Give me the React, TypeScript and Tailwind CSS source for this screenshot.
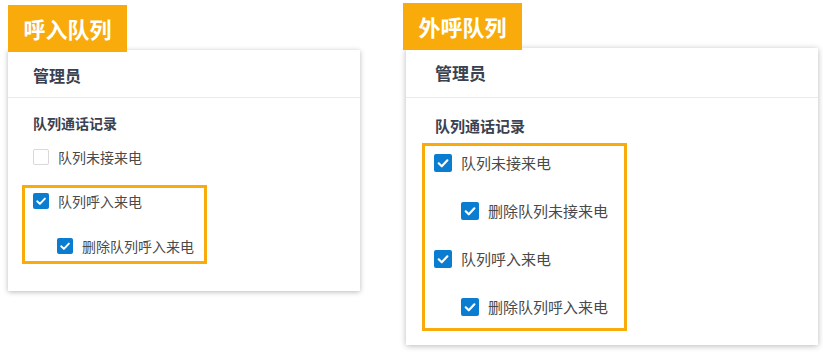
import React from "react";

const FONT = { fontFamily: '"Noto Sans CJK SC", "Noto Sans", sans-serif' };

function Box({ checked, size }: { checked: boolean; size: number }) {
  if (!checked) {
    return (
      <span
        className="shrink-0 rounded-[2px] border border-[#d9d9d9] bg-white"
        style={{ width: size, height: size }}
      />
    );
  }
  return (
    <span
      className="flex shrink-0 items-center justify-center rounded-[2px] bg-[#0b7dd0]"
      style={{ width: size, height: size }}
    >
      <svg viewBox="0 0 16 16" width={size} height={size}>
        <path d="M4.2 8.3 L6.9 10.9 L11.9 5.6" fill="none" stroke="#fff" strokeWidth="1.9" strokeLinecap="round" strokeLinejoin="round" />
      </svg>
    </span>
  );
}

function Row({ label, checked, indent, big }: { label: string; checked: boolean; indent?: boolean; big?: boolean }) {
  return (
    <div
      className={
        big
          ? "flex h-[28px] items-center gap-[9px] text-[15px] text-[#4a4a4a]"
          : "flex h-[26px] items-center gap-[9px] text-[14px] text-[#4a4a4a]"
      }
      style={{ paddingLeft: indent ? (big ? 27 : 24) : 0 }}
    >
      <Box checked={checked} size={big ? 18 : 16} />
      <span>{label}</span>
    </div>
  );
}

function Tag({ text }: { text: string }) {
  return (
    <div className="relative z-10 flex h-[47px] w-[119px] items-center justify-center bg-[#f8ab0a] text-[22px] font-bold text-white">
      {text}
    </div>
  );
}

export default function App() {
  return (
    <div className="flex h-[352px] w-[823px] bg-white" style={FONT}>
      {/* 呼入队列 */}
      <div className="ml-[8px] mt-[5px] w-[352px]">
        <Tag text="呼入队列" />
        <div className="-mt-[2px] h-[241px] bg-white shadow-[0_1px_5px_rgba(0,0,0,0.28)]">
          <div className="flex h-[48px] items-center border-b border-[#ebebeb] px-[25px] pt-[2px] text-[16px] font-bold text-[#3a4150]">
            管理员
          </div>
          <div className="px-[14px]">
            <div className="ml-[11px] pt-[15px] text-[14px] font-bold leading-[20px] text-[#3a4150]">队列通话记录</div>
            <div className="ml-[11px] mt-[11px]">
              <Row label="队列未接来电" checked={false} />
            </div>
            <div className="mt-[15px] w-[185px] border-[3px] border-[#f8ab0a] pb-[2px] pl-[8px]">
              <Row label="队列呼入来电" checked />
              <div className="mt-[19px]">
                <Row label="删除队列呼入来电" checked indent />
              </div>
            </div>
          </div>
        </div>
      </div>

      {/* 外呼队列 */}
      <div className="ml-[43px] mt-[3px] w-[415px]">
        <Tag text="外呼队列" />
        <div className="ml-[3px] -mt-[2px] h-[297px] w-[412px] bg-white shadow-[0_1px_6px_rgba(0,0,0,0.28)]">
          <div className="flex h-[50px] items-center border-b border-[#ebebeb] px-[29px] text-[17px] font-bold text-[#3a4150]">
            管理员
          </div>
          <div className="px-[16px]">
            <div className="ml-[13px] pt-[17px] text-[15px] font-bold leading-[22px] text-[#3a4150]">队列通话记录</div>
            <div className="mt-[6px] flex w-[205px] flex-col gap-[20px] border-[3px] border-[#f8ab0a] pb-[7px] pl-[9px] pt-[3px]">
              <Row label="队列未接来电" checked big />
              <Row label="删除队列未接来电" checked indent big />
              <Row label="队列呼入来电" checked big />
              <Row label="删除队列呼入来电" checked indent big />
            </div>
          </div>
        </div>
      </div>
    </div>
  );
}
